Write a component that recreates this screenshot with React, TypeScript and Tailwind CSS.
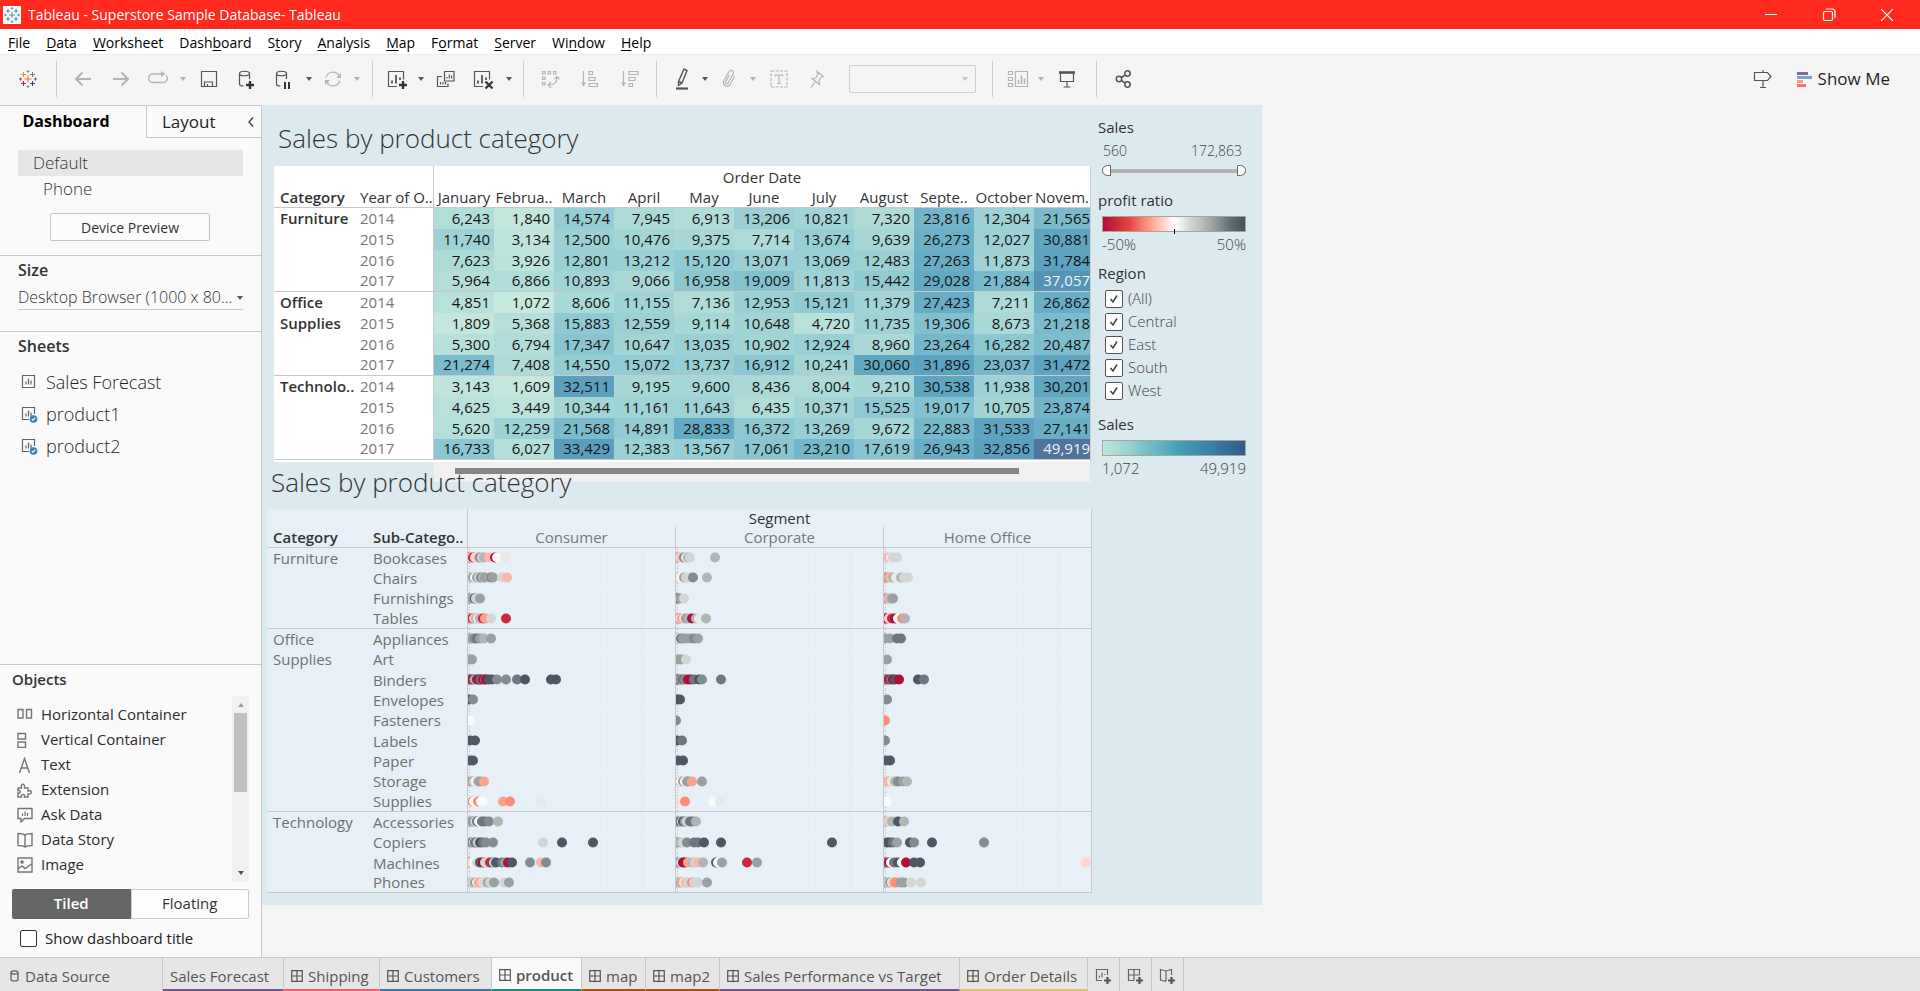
import { useState } from "react";
import type { ReactNode } from "react";

/* ---------- data ---------- */

const MONTHS = ["January", "Februa..", "March", "April", "May", "June", "July", "August", "Septe..", "October", "Novem."];

const SALES: { name: string; rows: number[][] }[] = [
  {
    name: "Furniture",
    rows: [
      [2014, 6243, 1840, 14574, 7945, 6913, 13206, 10821, 7320, 23816, 12304, 21565],
      [2015, 11740, 3134, 12500, 10476, 9375, 7714, 13674, 9639, 26273, 12027, 30881],
      [2016, 7623, 3926, 12801, 13212, 15120, 13071, 13069, 12483, 27263, 11873, 31784],
      [2017, 5964, 6866, 10893, 9066, 16958, 19009, 11813, 15442, 29028, 21884, 37057],
    ],
  },
  {
    name: "Office Supplies",
    rows: [
      [2014, 4851, 1072, 8606, 11155, 7136, 12953, 15121, 11379, 27423, 7211, 26862],
      [2015, 1809, 5368, 15883, 12559, 9114, 10648, 4720, 11735, 19306, 8673, 21218],
      [2016, 5300, 6794, 17347, 10647, 13035, 10902, 12924, 8960, 23264, 16282, 20487],
      [2017, 21274, 7408, 14550, 15072, 13737, 16912, 10241, 30060, 31896, 23037, 31472],
    ],
  },
  {
    name: "Technolo..",
    rows: [
      [2014, 3143, 1609, 32511, 9195, 9600, 8436, 8004, 9210, 30538, 11938, 30201],
      [2015, 4625, 3449, 10344, 11161, 11643, 6435, 10371, 15525, 19017, 10705, 23874],
      [2016, 5620, 12259, 21568, 14891, 28833, 16372, 13269, 9672, 22883, 31533, 27141],
      [2017, 16733, 6027, 33429, 12383, 13567, 17061, 23210, 17619, 26943, 32856, 49919],
    ],
  },
];

const RAMP: [number, number[]][] = [
  [1072, [198, 233, 222]],
  [6500, [177, 221, 217]],
  [14500, [148, 204, 212]],
  [21300, [122, 187, 205]],
  [30000, [96, 167, 193]],
  [37000, [85, 148, 182]],
  [49919, [81, 116, 159]],
];

function rampColor(v: number) {
  for (let i = 1; i < RAMP.length; i++) {
    const [hi, b] = RAMP[i];
    const [lo, a] = RAMP[i - 1];
    if (v <= hi) {
      const t = (v - lo) / (hi - lo);
      return `rgb(${a.map((c, k) => Math.round(c + (b[k] - c) * t)).join(",")})`;
    }
  }
  return "rgb(81,116,159)";
}

const DOT_COLORS: Record<string, string> = {
  R: "#ae1039", r: "#cf2640", o: "#fc8d75", s: "#fda18f", p: "#ffb6aa", P: "#ffd5cf",
  w: "#fafafa", l: "#e8e9e9", L: "#d4d6d6", g: "#b1b6b5", G: "#98a1a3", d: "#828c91",
  D: "#6d7881", k: "#4e5865",
};

/* Each mark is its x offset followed by its profit-ratio colour key. */
const PROFIT: { name: string; rows: [string, string, string, string][] }[] = [
  {
    name: "Furniture",
    rows: [
      ["Bookcases", "1r 3L 5r 7P 9l 10p 12d 14L 16g 21p 27R 29w 37l", "1r 2w 3s 5l 6p 8d 10l 12g 14L 39g", "1P 4p 7l 9L 13L"],
      ["Chairs", "1s 3L 5G 7w 9G 11L 13d 15g 17G 22s 23d 25G 34L 39p", "1g 3l 4P 6w 8G 10L 13L 17d 31g", "1o 3G 5s 7p 9g 12l 17g 20L 24L"],
      ["Furnishings", "1k 3g 5G 7k 8L 12G", "0R 2k 4G 8L", "0s 3G 5p 7g 9G"],
      ["Tables", "0r 2p 4r 6L 8s 9g 10l 12g 15r 17s 23L 38r", "0r 1w 3r 4P 6s 8P 10G 13g 16R 20g 23l 30g", "1R 3r 5P 8r 11R 14w 18o 21g"],
    ],
  },
  {
    name: "Office Supplies",
    rows: [
      ["Appliances", "1d 3L 4G 7d 9D 12G 16g 23G", "1d 3l 5D 7G 10G 14G 18d 22G", "1G 6G 13D 17D"],
      ["Art", "1G 4G", "2G 5G 10L", "3G"],
      ["Binders", "1k 3d 4R 6D 7g 9R 11k 12R 13D 15R 17D 18R 21k 24k 29d 38d 49D 57k 83k 88k", "1k 2R 4g 5d 7D 9d 12R 15R 18D 23k 26d 45D", "1k 3d 5R 7D 9R 11k 15R 34k 40D"],
      ["Envelopes", "1k 5d", "1k 4k", "3d"],
      ["Fasteners", "2w", "0d", "1o"],
      ["Labels", "2k 7k", "1k 6D", "1d"],
      ["Paper", "2k 5k", "2k 7k", "2k 6k"],
      ["Storage", "0g 4G 6L 8w 10g 12G 16s", "1w 4G 5w 7G 9w 11G 12G 16s 26G", "0w 3s 5p 8l 11g 14d 19G 23g"],
      ["Supplies", "1w 4o 6w 10o 13w 15w 35s 42o 73l", "-2P 9o 37w 44l", "3w"],
    ],
  },
  {
    name: "Technology",
    rows: [
      ["Accessories", "1d 3L 4G 6d 7L 9D 11w 14D 17D 21d 30g", "1d 4D 6L 7k 9G 11L 14D 17D 20g", "1G 3p 5L 8g 14k 20g"],
      ["Copiers", "2G 4d 6L 7D 9d 10L 12k 15D 18d 25d 75L 94k 125k", "1d 4g 7L 11d 18D 22D 28k 45k 156k", "3k 6k 9D 13G 26k 30d 48k 100d"],
      ["Machines", "0R 3P 6w 9L 12k 15R 17L 19L 22r 25k 26L 28k 34D 37G 40R 44k 62d 73p 78d", "0R 2w 3d 5L 7R 9R 12s 17g 19L 22p 27g 40k 42w 46G 71r 81G", "1R 3d 5R 7w 10D 14k 18w 22R 30k 36k 202P"],
      ["Phones", "1l 3g 5L 7G 9l 11s 13p 15P 17L 20G 22L 26G 36L 41G", "1G 3L 4g 6s 8l 10p 12L 16o 18L 22L 31G", "1G 3g 5L 6G 8l 10s 12o 17G 20G 27L 37L"],
    ],
  },
];

/* ---------- icons ---------- */

function Svg({ w = 20, h = 20, children, className = "" }: { w?: number; h?: number; children: ReactNode; className?: string }) {
  return (
    <svg width={w} height={h} viewBox={`0 0 ${w} ${h}`} fill="none" stroke="currentColor" strokeWidth="1.2" aria-hidden="true" className={`shrink-0 ${className}`}>
      {children}
    </svg>
  );
}

function Logo({ size, mono }: { size: number; mono?: boolean }) {
  const c = mono ? ["#4a86a8", "#4a86a8", "#4a86a8", "#4a86a8", "#4a86a8"] : ["#e8762c", "#c72037", "#59879b", "#1f447e", "#eb9129"];
  return (
    <svg width={size} height={size} viewBox="0 0 18 18" fill="none" strokeWidth="1.1" aria-hidden="true">
      <path d="M9 5.500v7M5.500 9h7" stroke={c[0]} />
      <path d="M4.500 2v5M2 4.500h5" stroke={c[4]} />
      <path d="M13.500 2v5M11 4.500h5" stroke={c[2]} />
      <path d="M4.500 11v5M2 13.500h5" stroke={c[1]} />
      <path d="M13.500 11v5M11 13.500h5" stroke={c[3]} />
      <path d="M9 0v3M7.500 1.500h3M9 15v3M7.500 16.500h3" stroke={mono ? c[0] : "#7099a6"} strokeWidth="1" />
      <path d="M1.500 7.500v3M0 9h3M16.500 7.500v3M15 9h3" stroke={mono ? c[0] : "#5b6591"} strokeWidth="1" />
    </svg>
  );
}

const BackIcon = () => <Svg><path d="M18 10H3M9.500 3.500L3 10l6.500 6.500" strokeWidth="2" /></Svg>;
const ForwardIcon = () => <Svg><path d="M2 10h15M10.500 3.500L17 10l-6.500 6.500" strokeWidth="2" /></Svg>;
const LoopIcon = () => <Svg><path d="M7 5H5a4 4 0 0 0 0 8.500h10a4 4 0 0 0 3-7M7 5h7" strokeWidth="1.400" /><path d="M13 2l4.500 3L13 8z" fill="currentColor" stroke="none" /></Svg>;
const SaveIcon = () => <Svg><path d="M2.500 2.500h15v15h-15zM5.500 17.500v-4.500h8v4.500M8.500 17v-2" /></Svg>;
const Cylinder = () => <path d="M2.500 4.500c0-3 10-3 10 0s-10 3-10 0V15c0 1 1.500 2 4 2M12.500 4.500V10" />;
const AddDataIcon = () => <Svg w={20} h={20}><Cylinder /><path d="M13 12v8M9 16h8" strokeWidth="2.400" stroke="#333" /></Svg>;
const PauseDataIcon = () => <Svg w={20} h={20}><Cylinder /><path d="M11 13v7M15 13v7" strokeWidth="2" stroke="#333" /></Svg>;
const RefreshIcon = () => <Svg><path d="M3 8.500A7.200 7.200 0 0 1 16 6.500M17 11.500A7.200 7.200 0 0 1 4 13.500" /><path d="M18 4v5h-5zM2 16v-5h5z" fill="currentColor" stroke="none" /></Svg>;
const ChartBox = () => (
  <>
    <path d="M17.500 10.500V2.500h-15v15H11" />
    <path d="M6 14.500v-3M10 14.500V6M14 11V8.500" strokeWidth="1.800" />
  </>
);
const NewSheetIcon = () => <Svg w={22}><ChartBox /><path d="M17 12v8M13 16h8" strokeWidth="2.400" stroke="#333" /></Svg>;
const DuplicateIcon = () => (
  <Svg>
    <path d="M8.500 2.500h9.500v9.500H8.500zM6 7.500H1.500v10H12v-3" />
    <path d="M11 9.500V8M13.300 9.500v-4M15.600 9.500V6.500M4.500 15.500v-2.500M7 15.500v-2.500M9.500 15.500v-2.500" />
  </Svg>
);
const ClearIcon = () => <Svg w={22}><ChartBox /><path d="M13.500 12.500l7 7M20.500 12.500l-7 7" strokeWidth="2.200" stroke="#333" /></Svg>;
const SwapIcon = () => (
  <Svg>
    <path d="M2.500 2.500h2.500v2.500H2.500zM8 2.500h2.500v2.500H8zM13.500 2.500H16v2.500h-2.500zM2.500 8h2.500v2.500H2.500zM2.500 13.500h2.500V16H2.500z" />
    <path d="M17 8c0 5.500-3 8-8 8M14.500 10L17 7.500l2.500 2.500M11 13l-3 3 3 3" />
  </Svg>
);
const SortAscIcon = () => <Svg><path d="M3.500 2v15M9 2.500h3.500v3H9zM9 8.500h6v3H9zM9 14.500h8.500v3H9z" /><path d="M1 13.500h5l-2.500 4z" fill="currentColor" stroke="none" /></Svg>;
const SortDescIcon = () => <Svg><path d="M3.500 2v15M9 2.500h9v3H9zM9 8.500h6v3H9zM9 14.500h3.500v3H9z" /><path d="M1 13.500h5l-2.500 4z" fill="currentColor" stroke="none" /></Svg>;
const PenIcon = () => <Svg w={20} h={24}><path d="M6.500 14.500l5.500-12.500 3 1.500-5 12.500-3.500 2.500zM6.500 14.500l3.500 1.500" strokeWidth="1.400" /><path d="M4 21.500h12" strokeWidth="2.200" /></Svg>;
const ClipIcon = () => <Svg><path d="M10.500 5.500l-3.800 7.200c-.8 1.800 1.500 3 2.500 1.300l4.800-9c1.500-3.300-2.500-5-4-2.300L5 11.500c-2.300 5 4 8.300 6.500 3.500l4-8" /></Svg>;
const TextBoxIcon = () => <Svg><path d="M2 2h16v16H2z" strokeDasharray="3 1.500" /><path d="M6.500 7.500V6h7v1.500M10 6v8.500M8 14.500h4" /></Svg>;
const PinIcon = () => <Svg><path d="M10 2.500l6.500 5-2 .5-2.500 3.500.5 4-7.500-6 4-.5 2-4zM8 13l-4 5.500" /></Svg>;
const CardsIcon = () => (
  <Svg w={22}>
    <path d="M1.500 2.500h4v3h-4zM1.500 8.500h4v3h-4zM1.500 14.500h4v3h-4zM8.500 2.500H20.500v15H8.500z" />
    <path d="M11.500 15v-4M14.500 15V6.500M17.500 15v-5.500" strokeWidth="1.600" />
  </Svg>
);
const PresentIcon = () => <Svg><path d="M2 3.500h16" strokeWidth="2.600" /><path d="M3.500 4v8.500h13V4M10 12.500v5M6.500 18h7" /></Svg>;
const ShareIcon = () => (
  <Svg>
    <g strokeWidth="1.500">
      <circle cx="5" cy="10" r="2.700" /><circle cx="13.500" cy="4.500" r="2.700" /><circle cx="13.500" cy="15.500" r="2.700" />
      <path d="M7.300 8.500l4-2.600M7.300 11.500l4 2.600" />
    </g>
  </Svg>
);
const SignpostIcon = () => <Svg><path d="M1.500 3.500h13l3.500 4-3.500 4h-13zM10 1v2.500M10 11.500V18M7 18.500h6" /></Svg>;
const CaretIcon = ({ className = "" }: { className?: string }) => (
  <svg width="6" height="4" viewBox="0 0 6 4" aria-hidden="true" className={className}><path d="M0 0h6L3 4z" fill="currentColor" /></svg>
);

const HorizontalIcon = () => <Svg w={16} h={16}><path d="M1 2.500h5v8.500H1zM9.500 2.500h5v8.500h-5z" strokeWidth="1.400" /></Svg>;
const VerticalIcon = () => <Svg w={16} h={16}><path d="M1 1.500h7.500v5.500H1zM1 10h7.500v5.500H1z" strokeWidth="1.400" /></Svg>;
const TextIcon = () => <Svg w={16} h={16}><path d="M2.500 16L7.500 1.500 12.500 16M4.200 11h6.600" strokeWidth="1.400" /></Svg>;
const ExtensionIcon = () => <Svg w={16} h={16}><path d="M1 15V11c3 1.500 3-4 0-2.500V6h3.500C3 1 8.500 1 7.500 6H11v3c4.500-1.500 4.500 4 0 3v3H7.500c1-3.500-4-3.500-3 0z" strokeWidth="1.400" /></Svg>;
const AskIcon = () => <Svg w={16} h={16}><path d="M1 1.500h14v10H7.500L4 15v-3.500H1z" strokeWidth="1.400" /><path d="M5.500 9V6.500M8 9V4.500M10.500 9V6" /></Svg>;
const StoryIcon = () => <Svg w={16} h={16}><path d="M8 3v12.500M8 3C6 1.500 3 1.500 1 1.500v12c2 0 5 0 7 1.500 2-1.500 5-1.500 7-1.500v-12c-2 0-5 0-7 1.500z" strokeWidth="1.400" /></Svg>;
const ImageIcon = () => <Svg w={16} h={16}><path d="M1 1h14v14H1zM1 12l4-3 3 2.500L14.500 7" strokeWidth="1.400" /><circle cx="5" cy="5" r="1.200" fill="currentColor" /></Svg>;

const SheetIcon = ({ used }: { used?: boolean }) => (
  <Svg w={17} h={17}>
    <path d={used ? "M13.500 8V1.500h-12v12H8" : "M1.500 1.500h12v12h-12z"} />
    <path d="M5 10.500V7.500M7.500 10.500v-6M10 10.500v-4" />
    {used && <><circle cx="12.500" cy="13" r="3.800" fill="#3181a8" stroke="none" /><path d="M10.800 13l1.300 1.300 2.300-2.600" stroke="#fff" strokeWidth="1.100" /></>}
  </Svg>
);
const GridIcon = () => <Svg w={12} h={12} className="mb-0.5"><path d="M.7.7h10.600v10.600H.7zM6 1v10M1 6h10" /></Svg>;
const CylinderIcon = () => <Svg w={9} h={12} className="mb-0.5"><path d="M1 2.500C1 .3 8 .3 8 2.500S1 4.500 1 2.500v7c0 2 7 2 7 0v-7" /></Svg>;
const PlusMark = () => <path d="M12.500 9v7M9 12.500h7" strokeWidth="2.200" stroke="#555" />;
const AddSheetIcon = () => <Svg w={17} h={17}><path d="M12.500 7V1.500h-11v11H7M4.500 9.500V7.500M7 9.500v-5M9.500 7V6" /><PlusMark /></Svg>;
const AddDashIcon = () => <Svg w={17} h={17}><path d="M12.500 7V1.500h-11v11H7M7 1.500v11M1.500 7h11" /><PlusMark /></Svg>;
const AddStoryIcon = () => <Svg w={17} h={17}><path d="M12.500 7V1.500L7 3 1.500 1.500v10.500L7 13.500M7 3v10" /><PlusMark /></Svg>;

/* ---------- chrome ---------- */

const MENU: [string, string, string][] = [
  ["", "F", "ile"], ["", "D", "ata"], ["", "W", "orksheet"], ["Dash", "b", "oard"], ["S", "t", "ory"], ["", "A", "nalysis"],
  ["", "M", "ap"], ["F", "o", "rmat"], ["", "S", "erver"], ["Wi", "n", "dow"], ["", "H", "elp"],
];

function TitleBar() {
  return (
    <header className="flex h-[29px] shrink-0 items-center bg-[#ff291d] pl-[3px] text-[14px] text-white">
      <span className="flex size-[18px] items-center justify-center bg-white"><Logo size={16} mono /></span>
      <h1 className="ml-[7px] grow">Tableau - Superstore Sample Database- Tableau</h1>
      <button aria-label="Minimize" className="flex h-full w-[58px] items-center justify-center">
        <Svg w={12} h={12}><path d="M0 5.500h12" strokeWidth="1" /></Svg>
      </button>
      <button aria-label="Restore" className="flex h-full w-[58px] items-center justify-center">
        <Svg w={14} h={14}><rect x="1.500" y="3.500" width="9" height="9" rx="1.500" strokeWidth="1.200" /><path d="M4 1h6a3 3 0 0 1 3 3v6" /></Svg>
      </button>
      <button aria-label="Close" className="mr-1 flex h-full w-[58px] items-center justify-center">
        <Svg w={12} h={12}><path d="M0 0l12 12M12 0L0 12" /></Svg>
      </button>
    </header>
  );
}

function MenuBar() {
  return (
    <nav className="flex h-[25px] shrink-0 items-center gap-4 bg-white pt-px pl-2 text-[14px] text-black">
      {MENU.map(([a, b, c]) => (
        <button key={a + b + c}>{a}<span className="underline underline-offset-2">{b}</span>{c}</button>
      ))}
    </nav>
  );
}

function Tool({ label, width = "w-[38px]", off, children }: { label: string; width?: string; off?: boolean; children: ReactNode }) {
  return <button aria-label={label} className={`flex h-8 items-center justify-center ${width} ${off ? "text-[#b4b4b4]" : "text-[#555]"}`}>{children}</button>;
}
function Caret({ label, off }: { label: string; off?: boolean }) {
  return (
    <button aria-label={label} className={`flex h-8 w-[14px] items-center justify-center ${off ? "text-[#b0b0b0]" : "text-[#555]"}`}>
      <CaretIcon />
    </button>
  );
}
const GROUP = "flex h-9 items-center border-r border-[#cfcfcf]";

function Toolbar() {
  return (
    <div className="flex h-[51px] shrink-0 items-center border-t border-[#ececec] bg-[#f5f5f5] pb-[2px]">
      <div className={`${GROUP} w-[57px] justify-center`}><button aria-label="Start page"><Logo size={18} /></button></div>
      <div className={`${GROUP} pr-2 pl-[7px]`}>
        <Tool label="Undo" off><BackIcon /></Tool>
        <Tool label="Redo" off><ForwardIcon /></Tool>
        <Tool label="Replay" width="w-9" off><LoopIcon /></Tool>
        <Caret label="Replay options" off />
        <Tool label="Save"><SaveIcon /></Tool>
        <Tool label="New data source"><AddDataIcon /></Tool>
        <Tool label="Pause auto updates" width="w-9"><PauseDataIcon /></Tool>
        <Caret label="Update options" />
        <Tool label="Run update" width="w-[34px]" off><RefreshIcon /></Tool>
        <Caret label="Run options" off />
      </div>
      <div className={`${GROUP} px-[7px]`}>
        <Tool label="New worksheet" width="w-[34px]"><NewSheetIcon /></Tool>
        <Caret label="New sheet options" />
        <Tool label="Duplicate" width="w-9"><DuplicateIcon /></Tool>
        <Tool label="Clear sheet"><ClearIcon /></Tool>
        <Caret label="Clear options" />
      </div>
      <div className={`${GROUP} px-[6px]`}>
        <Tool label="Swap rows and columns" width="w-10" off><SwapIcon /></Tool>
        <Tool label="Sort ascending" width="w-10" off><SortAscIcon /></Tool>
        <Tool label="Sort descending" width="w-10" off><SortDescIcon /></Tool>
      </div>
      <div className={`${GROUP} pr-4 pl-[9px]`}>
        <Tool label="Highlight" width="w-8"><PenIcon /></Tool>
        <Caret label="Highlight options" />
        <Tool label="Group members" width="w-[34px]" off><ClipIcon /></Tool>
        <Caret label="Group options" off />
        <Tool label="Show mark labels" off><TextBoxIcon /></Tool>
        <Tool label="Fix axes" off><PinIcon /></Tool>
        <span className="relative ml-[13px]">
          <select aria-label="Fit" disabled className="block h-7 w-[127px] appearance-none rounded-xs border border-[#d0d0d0] bg-[#f5f5f5]" />
          <CaretIcon className="pointer-events-none absolute top-3 right-2 text-[#c4c4c4]" />
        </span>
      </div>
      <div className={`${GROUP} pr-[10px] pl-[9px]`}>
        <Tool label="Show or hide cards" width="w-8" off><CardsIcon /></Tool>
        <Caret label="Card options" off />
        <Tool label="Presentation mode"><PresentIcon /></Tool>
      </div>
      <div className="pl-2"><Tool label="Share"><ShareIcon /></Tool></div>
      <div className="ml-auto flex items-center pr-[30px]">
        <Tool label="Data guide" width="w-10"><SignpostIcon /></Tool>
        <button className="ml-[14px] flex items-center gap-[6px] text-[17px] text-[#1f1f1f]">
          <svg width="15" height="15" viewBox="0 0 15 15" aria-hidden="true">
            <path d="M0 0h11v3H0z" fill="#80699b" /><path d="M0 4h15v3H0z" fill="#7ea2d0" /><path d="M0 8h6v3H0z" fill="#f2a27e" /><path d="M0 12h9v3H0z" fill="#fb6b7d" />
          </svg>
          Show Me
        </button>
      </div>
    </div>
  );
}

/* ---------- side pane ---------- */

const OBJECTS: [string, () => ReactNode][] = [
  ["Horizontal Container", HorizontalIcon], ["Vertical Container", VerticalIcon], ["Text", TextIcon], ["Extension", ExtensionIcon],
  ["Ask Data", AskIcon], ["Data Story", StoryIcon], ["Image", ImageIcon],
];

function SidePane() {
  const [showTitle, setShowTitle] = useState(false);
  return (
    <aside className="flex w-[262px] shrink-0 flex-col border-t border-r border-[#c9c9c9] bg-[#fafafa] text-[#333]">
      <div className="flex h-8 shrink-0">
        <button className="w-[146px] pr-[14px] pb-[2px] text-[16px] font-bold text-black">Dashboard</button>
        <div className="flex grow items-center justify-between border-b border-l border-[#c9c9c9] pr-[6px] pl-[15px]">
          <button className="text-[17px] text-[#222]">Layout</button>
          <button aria-label="Collapse pane" className="text-[#444]"><Svg w={8} h={12}><path d="M6 1.500L2 6l4 4.500" strokeWidth="1.400" /></Svg></button>
        </div>
      </div>
      <div className="h-[118px] shrink-0 border-b border-[#c9c9c9] px-[18px] pt-3">
        <button className="block h-[26px] w-full bg-[#e6e6e6] pl-[15px] text-left text-[17px] font-light">Default</button>
        <button className="block h-[26px] w-full pl-[25px] text-left text-[17px] font-light">Phone</button>
        <button className="mr-auto ml-8 mt-[11px] block h-[28px] w-[160px] rounded-xs border border-[#c4c4c4] bg-[#fcfcfc] text-[14px]">Device Preview</button>
      </div>
      <div className="h-[76px] shrink-0 border-b border-[#c9c9c9] px-[18px] pt-[3px]">
        <h2 className="text-[16px] leading-[22px] font-semibold"><label htmlFor="size">Size</label></h2>
        <div className="relative mt-1">
          <select id="size" className="block h-[25px] w-full appearance-none border-b border-[#c9c9c9] bg-transparent text-[16px] leading-6 font-light">
            <option>Desktop Browser (1000 x 80...</option>
          </select>
          <CaretIcon className="pointer-events-none absolute top-[11px] right-0 text-[#555]" />
        </div>
      </div>
      <div className="grow px-[18px] pt-[3px]">
        <h2 className="text-[16px] leading-[22px] font-semibold">Sheets</h2>
        <ul className="mt-[9px] pl-[3px] text-[18px] font-light">
          {["Sales Forecast", "product1", "product2"].map((s, i) => (
            <li key={s}>
              <button className="flex h-8 items-center gap-2 text-[#222]"><span className="text-[#666]"><SheetIcon used={i > 0} /></span>{s}</button>
            </li>
          ))}
        </ul>
      </div>
      <div className="shrink-0 border-t border-[#c9c9c9] px-3 pt-[3px]">
        <h2 className="text-[15px] leading-[22px] font-semibold">Objects</h2>
        <div className="mt-[6px] flex h-[186px] justify-between">
          <ul className="pt-[6px] pl-[5px] text-[15px]">
            {OBJECTS.map(([name, Icon]) => (
              <li key={name}><button className="flex h-[25px] items-center gap-2 text-[#2d2d2d]"><span className="text-[#757575]"><Icon /></span>{name}</button></li>
            ))}
          </ul>
          <div className="flex w-[17px] flex-col items-center bg-[#f1f1f1]">
            <CaretIcon className="mt-[7px] rotate-180 text-[#a0a0a0]" />
            <div className="mt-[6px] h-[79px] w-[13px] bg-[#c1c1c1]" />
            <CaretIcon className="mt-auto mb-[7px] text-[#505050]" />
          </div>
        </div>
        <div className="mt-[7px] flex h-[30px] text-[15px]">
          <button className="w-1/2 rounded-l-xs bg-[#666] pb-[2px] font-semibold text-white">Tiled</button>
          <button className="w-1/2 rounded-r-xs border border-[#cacaca] bg-[#fdfdfd] pb-[2px]">Floating</button>
        </div>
        <label className="flex h-[38px] items-center gap-2 pl-2 text-[15px] text-[#222]">
          <input type="checkbox" checked={showTitle} onChange={(e) => setShowTitle(e.target.checked)} className="size-[17px] appearance-none rounded-xs border border-[#333] bg-white checked:bg-[#666]" />
          Show dashboard title
        </label>
      </div>
    </aside>
  );
}

/* ---------- dashboard ---------- */

function SalesTable() {
  return (
    <section>
      <h2 className="flex h-[61px] items-center pt-[6px] pl-4 text-[26px] font-light text-[#333]">Sales by product category</h2>
      <div className="ml-3 w-[817px] overflow-hidden border-r border-[#d0d0d0] bg-white pb-[2px]">
        <table className="w-full table-fixed border-separate border-spacing-0 text-[15px] text-[#333]">
          <colgroup>
            <col className="w-20" /><col className="w-20" />
            {MONTHS.map((m) => <col key={m} className={m === "Novem." ? "w-[56px]" : "w-[60px]"} />)}
          </colgroup>
          <thead className="[&_th]:p-0 [&_th]:font-semibold [&_th]:whitespace-nowrap">
            <tr className="h-[22px]">
              <th colSpan={2} className="border-r border-[#c9c9c9]" />
              <th colSpan={11} className="leading-[22px] font-medium!">Order Date</th>
            </tr>
            <tr className="h-5 leading-[19px] [&>th]:border-b [&>th]:border-[#c9c9c9]">
              <th className="pl-[6px]! text-left">Category</th>
              <th className="border-r pl-[6px]! text-left font-medium!">Year of O..</th>
              {MONTHS.map((m) => <th key={m} scope="col" className="font-medium!">{m}</th>)}
            </tr>
          </thead>
          <tbody>
            {SALES.map((group) =>
              group.rows.map(([year, ...values], i) => {
                const edge = i === 3 ? "border-b border-[#c9c9c9]" : "";
                return (
                  <tr key={group.name + year} className="h-[21px] leading-[18px]">
                    {i === 0 && <th rowSpan={4} className="border-b border-[#c9c9c9] p-0 pl-[6px] text-left align-top leading-[21px] font-semibold">{group.name}</th>}
                    <td className={`border-r border-[#c9c9c9] p-0 pb-[2px] pl-[6px] text-[#787878] ${i === 3 ? "border-b" : ""}`}>{year}</td>
                    {values.map((v, k) => (
                      <td key={k} className={`p-0 pb-[2px] text-right ${k < 10 ? "pr-1" : ""} ${edge} ${v > 35000 ? "text-[#f0f5f8]" : "text-[#141414]"}`} style={{ backgroundColor: rampColor(v) }}>
                        {v.toLocaleString("en-US")}
                      </td>
                    ))}
                  </tr>
                );
              }),
            )}
          </tbody>
        </table>
      </div>
      <div className="mr-[2px] ml-[172px] h-[20px] bg-[#f0f0f0] pt-[6px] pr-[71px] pl-[21px]"><div className="h-[6px] bg-[#858585]" /></div>
    </section>
  );
}

function Pane({ marks, short }: { marks: string; short: boolean }) {
  return (
    <svg aria-hidden="true" className={`block w-full ${short ? "h-[19px]" : "h-5"}`}>
      <path d="M46 0v21M90 0v21M135 0v21M179 0v21" stroke="#f1f3f4" />
      <path d="M1.500 0v21" stroke="#b8bdc0" strokeDasharray="1 2" />
      {marks.split(" ").map((m, i) => {
        const key = m.slice(-1);
        return <circle key={i} cx={parseInt(m, 10)} cy="9.500" r="5" fill={DOT_COLORS[key]} />;
      })}
    </svg>
  );
}

function ProfitChart() {
  let n = -1;
  const line = "border-[#c9c9c9]";
  return (
    <section>
      <h2 className="-mt-4 mb-[11px] pl-[9px] text-[26px] leading-8 font-light text-[#333]">Sales by product category</h2>
      <table className={`ml-[5px] w-[825px] table-fixed border-separate border-spacing-0 bg-[#e6f0f6] text-[15px] ${line}`}>
        <colgroup>
          <col className="w-[100px]" /><col className="w-[101px]" /><col /><col /><col />
        </colgroup>
        <thead className="[&_th]:p-0 [&_th]:whitespace-nowrap">
          <tr className="h-[18px] leading-[18px]">
            <th colSpan={2} className={`border-r ${line}`} />
            <th colSpan={3} className={`border-r font-medium text-[#333] ${line}`}>Segment</th>
          </tr>
          <tr className="h-[21px] leading-5 [&>th]:border-b [&>th]:border-[#c9c9c9]">
            <th className="pl-[6px]! text-left font-semibold text-[#333]">Category</th>
            <th className="border-r pl-[6px]! text-left font-semibold text-[#333]">Sub-Catego..</th>
            {["Consumer", "Corporate", "Home Office"].map((s) => <th key={s} scope="col" className="border-r font-normal text-[#787878]">{s}</th>)}
          </tr>
        </thead>
        <tbody className="text-[#707070]">
          {PROFIT.map((group) =>
            group.rows.map(([name, ...panes], i) => {
              n++;
              const last = i === group.rows.length - 1;
              return (
                <tr key={group.name + name} className={n % 3 === 2 ? "h-[21px]" : "h-5"}>
                  {i === 0 && <th rowSpan={group.rows.length} className={`border-b p-0 pr-2 pl-[6px] text-left align-top leading-5 font-normal ${line}`}>{group.name}</th>}
                  <td className={`border-r p-0 pb-px pl-[6px] leading-[18px] ${line} ${last ? "border-b" : ""}`}>{name}</td>
                  {panes.map((p, k) => <td key={k} className={`border-r p-0 ${line} ${last ? "border-b" : ""}`}><Pane marks={p} short={last} /></td>)}
                </tr>
              );
            }),
          )}
        </tbody>
      </table>
    </section>
  );
}

function Heading({ children, className = "" }: { children: ReactNode; className?: string }) {
  return <h3 className={`text-[15px] leading-5 font-medium text-[#333] ${className}`}>{children}</h3>;
}

const SLIDER = "h-[11px] w-1/2 appearance-none bg-[linear-gradient(#b3b3b3,#b3b3b3)] bg-[length:100%_4px] bg-center bg-no-repeat [&::-webkit-slider-thumb]:h-[11px] [&::-webkit-slider-thumb]:w-[9px] [&::-webkit-slider-thumb]:appearance-none [&::-webkit-slider-thumb]:border [&::-webkit-slider-thumb]:border-[#666] [&::-webkit-slider-thumb]:bg-white";

function Legends() {
  const [checked, setChecked] = useState<Record<string, boolean>>({ "(All)": true, Central: true, East: true, South: true, West: true });
  return (
    <aside className="w-[164px] pt-3 pr-4 text-[#444]">
      <Heading>Sales</Heading>
      <div className="mt-[5px] flex justify-between pr-1 pl-[5px] text-[14px] leading-[18px] font-light"><span>560</span><span>172,863</span></div>
      <div className="mt-[5px] flex pl-1">
        <input type="range" aria-label="Minimum sales" min={560} max={86000} defaultValue={560} className={`${SLIDER} [&::-webkit-slider-thumb]:rounded-l-full`} />
        <input type="range" aria-label="Maximum sales" min={86000} max={172863} defaultValue={172863} className={`${SLIDER} [&::-webkit-slider-thumb]:rounded-r-full`} />
      </div>
      <Heading className="mt-[14px]">profit ratio</Heading>
      <div className="relative mt-[6px] ml-1 h-4 border border-[#a9a698] bg-[linear-gradient(90deg,#ae1039,#e5413f_18%,#fc8d75_30%,#ffffff_50%,#d4d6d6_62%,#98a1a3_78%,#5f6b76_90%,#49525e)]">
        <span className="absolute top-3 left-1/2 h-[5px] w-px bg-black" />
      </div>
      <div className="mt-[2px] flex justify-between pl-1 text-[15px] leading-5 font-light"><span>-50%</span><span>50%</span></div>
      <Heading className="mt-[9px]">Region</Heading>
      <ul className="mt-1 pl-[7px] text-[15px] font-light">
        {Object.keys(checked).map((r) => (
          <li key={r} className="h-[23px]">
            <label className="flex h-[23px] items-center gap-[5px]">
              <span className="relative flex">
                <input type="checkbox" checked={checked[r]} onChange={(e) => setChecked({ ...checked, [r]: e.target.checked })} className="size-[18px] appearance-none rounded-xs border border-[#555] bg-white" />
                {checked[r] && <Svg w={10} h={10} className="pointer-events-none absolute top-1 left-1"><path d="M1.500 5L4 8 8 1.500" strokeWidth="1.500" /></Svg>}
              </span>
              {r}
            </label>
          </li>
        ))}
      </ul>
      <Heading className="mt-[12px]">Sales</Heading>
      <div className="mt-[6px] ml-1 h-4 border border-[#a9a698] bg-[linear-gradient(90deg,#bfe7da,#8fd0cd_20%,#45a2ba_52%,#3a7ba6_78%,#355b88)]" />
      <div className="mt-[2px] flex justify-between pl-1 text-[15px] leading-5 font-light"><span>1,072</span><span>49,919</span></div>
    </aside>
  );
}

/* ---------- sheet tabs ---------- */

const TABS: [string, string, string][] = [
  ["Sales Forecast", "w-[121px]", "border-b-[#70588a]"],
  ["Shipping", "w-24", "border-b-[#f45c74]"],
  ["Customers", "w-[112px]", "border-b-[#44759b]"],
  ["product", "w-[90px]", "border-b-[#1b8f79]"],
  ["map", "w-16", "border-b-[#a8530f]"],
  ["map2", "w-[74px]", "border-b-[#a8530f]"],
  ["Sales Performance vs Target", "w-[240px]", "border-b-[#70588a]"],
  ["Order Details", "w-32", "border-b-[#dfc478]"],
];

function SheetTabs() {
  return (
    <footer className="flex h-[34px] shrink-0 border-t border-[#c9c9c9] bg-[#e6e6e6] text-[15px] text-[#555]">
      <button className="flex w-[163px] items-center gap-[6px] border-r border-[#c9c9c9] pt-1 pl-[10px]"><CylinderIcon />Data Source</button>
      {TABS.map(([name, width, color]) => (
        <button key={name} className={`flex items-center gap-[5px] border-r border-b-2 border-r-[#c9c9c9] pl-[7px] whitespace-nowrap ${width} ${color} ${name === "product" ? "bg-[#fafafa] pt-1 font-semibold" : "pt-[6px]"}`}>
          {name !== "Sales Forecast" && <GridIcon />}
          {name}
        </button>
      ))}
      {[["New worksheet", AddSheetIcon], ["New dashboard", AddDashIcon], ["New story", AddStoryIcon]].map(([label, Icon]) => {
        const I = Icon as () => ReactNode;
        return <button key={label as string} aria-label={label as string} className="flex w-8 items-center justify-center border-r border-[#c9c9c9] pt-1 text-[#666]"><I /></button>;
      })}
    </footer>
  );
}

export default function App() {
  return (
    <div className="flex h-screen flex-col bg-[#f5f5f5] font-['Open_Sans',sans-serif]">
      <TitleBar />
      <MenuBar />
      <Toolbar />
      <div className="flex min-h-0 grow">
        <SidePane />
        <main className="min-w-0 grow overflow-hidden bg-[#f4f4f4]">
          <div className="flex h-[800px] w-[1000px] justify-between bg-[#dce9ef]">
            <div className="w-[830px]">
              <SalesTable />
              <ProfitChart />
            </div>
            <Legends />
          </div>
        </main>
      </div>
      <SheetTabs />
    </div>
  );
}
